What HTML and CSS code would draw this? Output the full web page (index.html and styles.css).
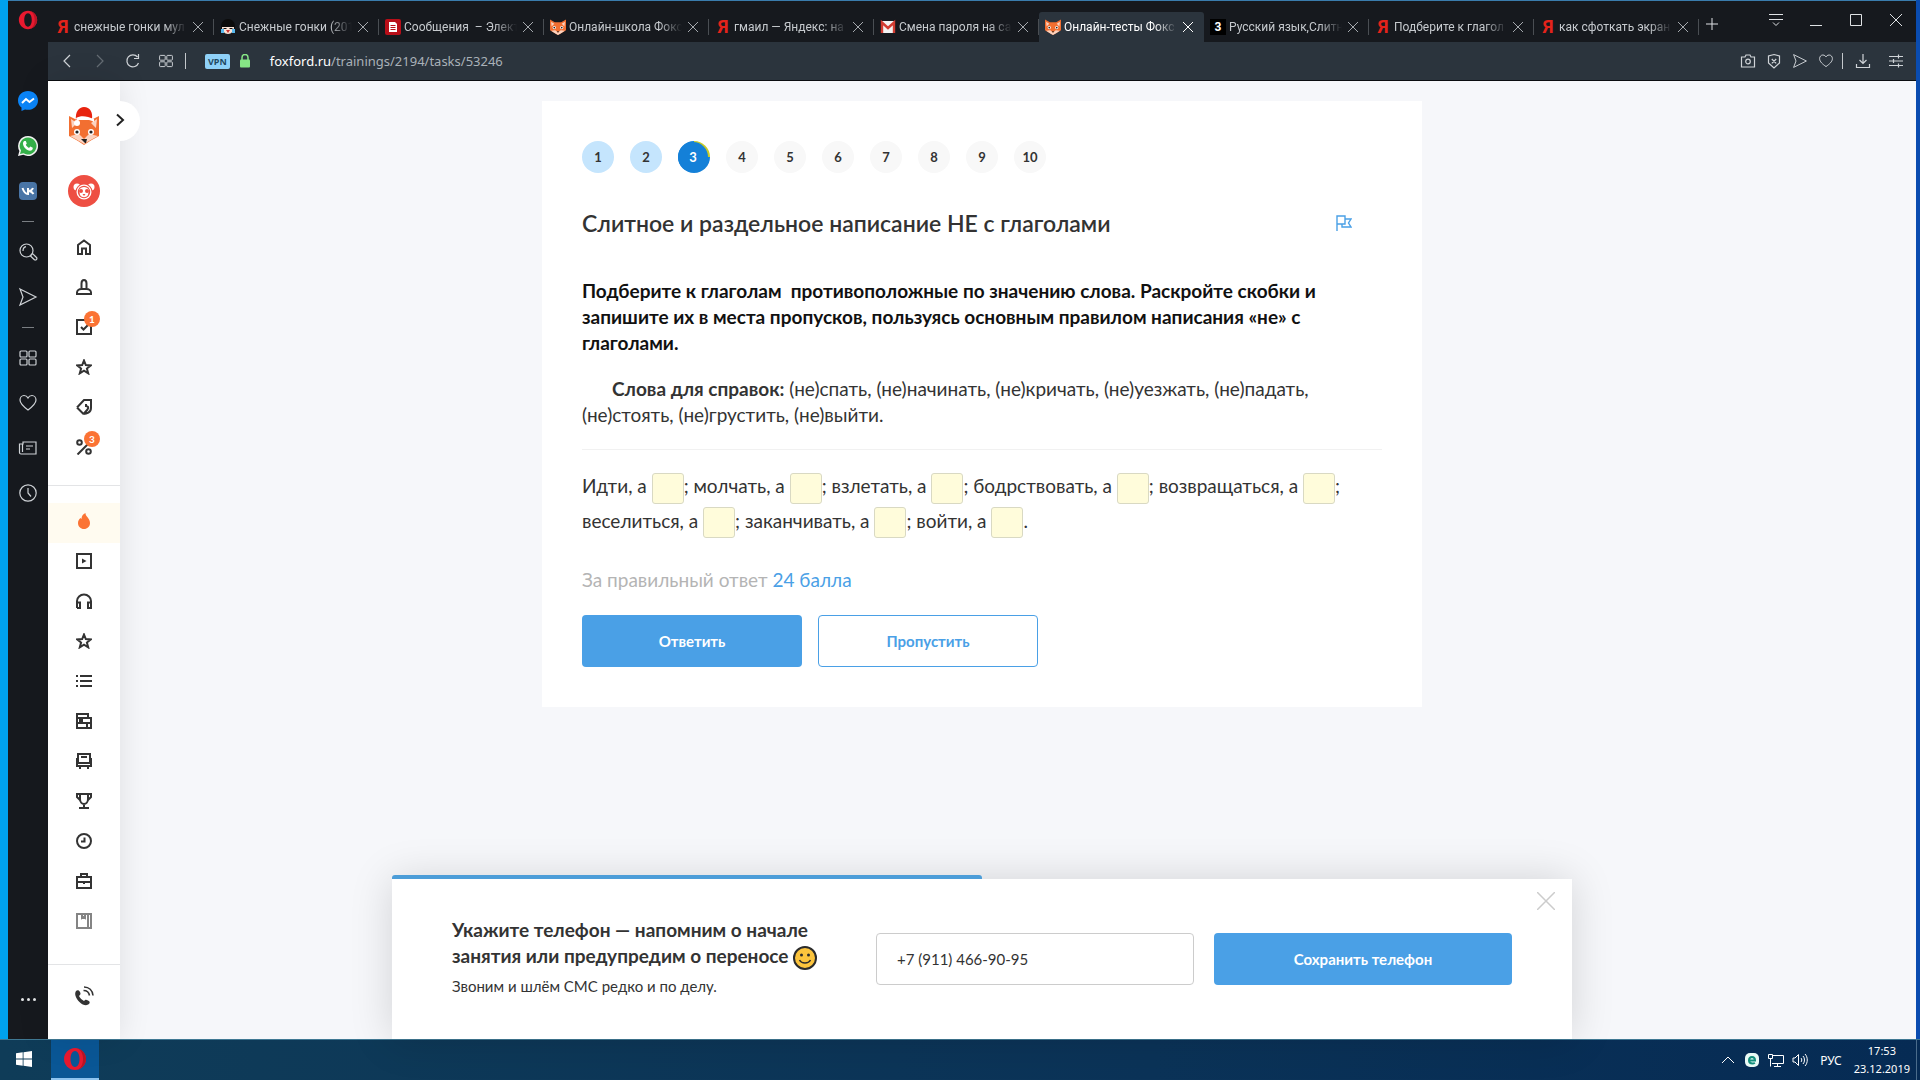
FILE: index.html
```html
<!DOCTYPE html>
<html lang="ru">
<head>
  <meta charset="UTF-8">
  <title>Онлайн-тесты Фоксфорд</title>
  <link rel="stylesheet" href="styles.css">
</head>
<body>
  <!-- shared icons -->
  <svg class="sprite" width="0" height="0">
    <symbol id="i-x" viewBox="0 0 16 16"><path d="M3 3l10 10M13 3L3 13"/></symbol>
    <symbol id="i-heart" viewBox="0 0 20 20"><path d="M10 17C6 14 2 11 2 7c0-2.500 1.800-4.500 4-4.500S9.500 4 10 5c.5-1 1.800-2.500 4-2.500s4 2 4 4.500c0 4-4 7-8 10z"/></symbol>
    <symbol id="i-send" viewBox="0 0 20 20"><path d="M2 2l16 8-16 8 3-8z"/></symbol>
    <symbol id="i-grid" viewBox="0 0 20 20"><rect x="2" y="3" width="7" height="6" rx="1"/><rect x="11" y="3" width="7" height="6" rx="1"/><rect x="2" y="11" width="7" height="6" rx="1"/><rect x="11" y="11" width="7" height="6" rx="1"/></symbol>
    <symbol id="i-star" viewBox="0 0 16 16"><path d="M8 1.500l1.800 4.600 5 .3-3.900 3.100 1.300 4.800L8 11.600l-4.200 2.700 1.300-4.800L1.200 6.400l5-.3z"/></symbol>
    <symbol id="i-fox" viewBox="0 0 30 30">
      <path fill="#f26f31" d="M0 1l9 5h12l9-5v20l-10 6-5 3-5-3-10-6z"/>
      <path fill="#fbd3c0" d="M2 5l6 4-5 5zM28 5l-6 4 5 5z"/>
      <path fill="#fbd3c0" d="M2 22l8-1 5 5 5-5 8 1-8 5-5 3-5-3z"/>
      <circle cx="8" cy="16" r="3" fill="#fff"/><circle cx="22" cy="16" r="3" fill="#fff"/>
      <circle cx="8" cy="16" r="1.600" fill="#222"/><circle cx="22" cy="16" r="1.600" fill="#222"/>
      <path fill="#222" d="M13 23h4l-2 3z"/>
    </symbol>
    <symbol id="i-opera" viewBox="0 0 24 24">
      <path fill="#e8192f" fill-rule="evenodd" d="M12 1c6 0 11 5 11 11s-5 11-11 11S1 18 1 12 6 1 12 1zm0 3C9 4 7.500 8 7.500 12S9 20 12 20s4.500-4 4.500-8S15 4 12 4z"/>
      <path fill="#b81526" d="M14 1.200c5 1 9 5.400 9 10.800s-4 9.800-9 10.800c4-1 6-6 6-10.800S18 2.200 14 1.200z"/>
    </symbol>
  </svg>

  <div class="desktop">
    <div class="window">
      <aside class="opera-bar">
        <button class="opera-logo" aria-label="Opera"><svg class="i20"><use href="#i-opera"/></svg></button>
        <nav class="opera-nav">
          <a href="#" aria-label="Messenger"><svg class="i20" viewBox="0 0 20 20"><path fill="#0a84f7" d="M10 0c5.600 0 10 4 10 9.400s-4.400 9.400-10 9.400c-1 0-2 0-3-.4L3.500 20v-3.500C1.300 14.900 0 12.400 0 9.400 0 4 4.400 0 10 0z"/><path fill="none" stroke="#fff" stroke-width="2" d="M4 12l4-4 3.500 3L16 7.500"/></svg></a>
          <a href="#" aria-label="WhatsApp"><svg class="i20" viewBox="0 0 20 20"><path fill="#f4f4f4" d="M10 0a10 10 0 1 1-4.700 18.800L0 20l1.400-5A10 10 0 0 1 10 0z"/><path fill="#35b14a" d="M10 1.500a8.500 8.500 0 1 1-4.500 15.700L2 18l1-3.400A8.500 8.500 0 0 1 10 1.500z"/><path fill="#fff" d="M6.500 5h1.300l1 2.500-1 1.200c.6 1.400 1.700 2.500 3.200 3.200l1.300-1.300 2.500 1.200c.2 2-1.300 3-2.800 3C8.500 14.500 5 11 5 7.500 5 6.300 5.600 5.300 6.500 5z"/></svg></a>
          <a href="#" aria-label="VK"><svg class="i18" viewBox="0 0 18 18"><rect width="18" height="18" rx="4" fill="#4a76a8"/><path fill="none" stroke="#fff" stroke-width="2" d="M3.500 6c1 3 2.500 6 5.500 6V6M14 6c-.6 1.600-2.500 3-4.500 3 2 0 4 1.500 5 3"/></svg></a>
          <span class="dash"></span>
          <a href="#" aria-label="Поиск"><svg class="i20 line" viewBox="0 0 20 20"><circle cx="8.500" cy="8.500" r="6.500"/><path d="M5 9c0-2.500 1.200-4 3-4.300M13 13l1.500-1.500 4 4c.8.800.3 2.300-1 2.500-.4.100-.8 0-1.100-.3L12.500 14z"/></svg></a>
          <a href="#" aria-label="Моё"><svg class="i20 line"><use href="#i-send"/></svg></a>
          <span class="dash"></span>
          <a href="#" aria-label="Экспресс-панель"><svg class="i20 line"><use href="#i-grid"/></svg></a>
          <a href="#" aria-label="Закладки"><svg class="i20 line"><use href="#i-heart"/></svg></a>
          <a href="#" aria-label="Новости"><svg class="i20 line" viewBox="0 0 20 20"><path d="M5 4h13v12H3c-1 0-1.500-.5-1.500-1.500V6H5zM4.500 6v8M8 8h7M8 11h4"/></svg></a>
          <a href="#" aria-label="История"><svg class="i20 line" viewBox="0 0 20 20"><circle cx="10" cy="10" r="8.200"/><path d="M10 5v5l3 3.500"/></svg></a>
        </nav>
        <button class="dots" aria-label="Ещё"><i></i><i></i><i></i></button>
      </aside>

      <div class="browser">
        <header class="tabs">
          <div class="tab"><b class="ya">Я</b><span>снежные гонки мул</span><button aria-label="Закрыть"><svg><use href="#i-x"/></svg></button></div>
          <div class="tab"><svg class="fav" viewBox="0 0 16 16"><circle cx="8" cy="7" r="7" fill="#0b0b0b"/><path fill="#fbe3d6" d="M2 8h12c0 4-2.500 7-6 7S2 12 2 8z"/><path stroke="#111" d="M3.500 9.500h3M9.500 9.500h3"/><path fill="#58b9ee" d="M1 10h3v4H1zM12 10h3v4h-3z"/><path fill="#c33" d="M6 11h4l-2 3z"/></svg><span>Снежные гонки (201</span><button aria-label="Закрыть"><svg><use href="#i-x"/></svg></button></div>
          <div class="tab"><svg class="fav" viewBox="0 0 16 16"><rect width="16" height="16" rx="2" fill="#b80f19"/><path fill="#fff" d="M4 3h6l2 2v8H4z"/><path stroke="#b80f19" d="M5.500 6.500h5M5.500 8.500h5M5.500 10.500h5"/></svg><span>Сообщения &nbsp;– Элект</span><button aria-label="Закрыть"><svg><use href="#i-x"/></svg></button></div>
          <div class="tab"><svg class="fav"><use href="#i-fox"/></svg><span>Онлайн-школа Фокс</span><button aria-label="Закрыть"><svg><use href="#i-x"/></svg></button></div>
          <div class="tab"><b class="ya">Я</b><span>гмаил — Яндекс: на</span><button aria-label="Закрыть"><svg><use href="#i-x"/></svg></button></div>
          <div class="tab"><svg class="fav" viewBox="0 0 16 16"><path fill="#f3f3f3" d="M1 2h14v12H1z"/><path fill="none" stroke="#d23c32" stroke-width="2.400" d="M2 14V3.500L8 9l6-5.500V14"/></svg><span>Смена пароля на са</span><button aria-label="Закрыть"><svg><use href="#i-x"/></svg></button></div>
          <div class="tab active"><svg class="fav"><use href="#i-fox"/></svg><span>Онлайн-тесты Фокс</span><button aria-label="Закрыть"><svg><use href="#i-x"/></svg></button></div>
          <div class="tab"><b class="fav three">3</b><span>Русский язык,Слитн</span><button aria-label="Закрыть"><svg><use href="#i-x"/></svg></button></div>
          <div class="tab"><b class="ya">Я</b><span>Подберите к глагол</span><button aria-label="Закрыть"><svg><use href="#i-x"/></svg></button></div>
          <div class="tab"><b class="ya">Я</b><span>как сфоткать экран</span><button aria-label="Закрыть"><svg><use href="#i-x"/></svg></button></div>
          <button class="new-tab" aria-label="Новая вкладка"><svg viewBox="0 0 12 12"><path d="M6 0v12M0 6h12"/></svg></button>
          <div class="win-controls">
            <button aria-label="Меню вкладок"><svg viewBox="0 0 16 16"><path d="M1 2.500h14M1 7.500h14M5 10.500l3 3 3-3"/></svg></button>
            <button aria-label="Свернуть"><svg viewBox="0 0 16 16"><path d="M2 13.500h12"/></svg></button>
            <button aria-label="Развернуть"><svg viewBox="0 0 16 16"><path d="M2.500 2.500h11v11h-11z"/></svg></button>
            <button aria-label="Закрыть окно"><svg viewBox="0 0 16 16"><path d="M2 2l12 12M14 2L2 14"/></svg></button>
          </div>
        </header>

        <div class="address">
          <button aria-label="Назад"><svg class="line" viewBox="0 0 16 16"><path d="M11 2L5 8l6 6"/></svg></button>
          <button class="dim" aria-label="Вперёд"><svg class="line" viewBox="0 0 16 16"><path d="M5 2l6 6-6 6"/></svg></button>
          <button aria-label="Обновить"><svg class="line" viewBox="0 0 16 16"><path d="M13.500 10A6 6 0 1 1 12.500 4M13.500 1v4.500H9"/></svg></button>
          <button aria-label="Экспресс-панель"><svg class="line"><use href="#i-grid"/></svg></button>
          <i class="bar"></i>
          <span class="vpn">VPN</span>
          <svg class="lock" viewBox="0 0 10 14"><path fill="none" stroke="#86e686" stroke-width="1.500" d="M2 6V3.500a3 3 0 0 1 6 0V6"/><rect y="5.500" width="10" height="8" rx="1" fill="#86e686"/></svg>
          <span class="url"><b>foxford.ru</b>/trainings/2194/tasks/53246</span>
          <div class="tools">
            <button aria-label="Снимок"><svg class="line" viewBox="0 0 16 16"><path d="M1.500 4H5l1-2h4l1 2h3.500v10h-13z"/><circle cx="8" cy="8.500" r="2.300"/></svg></button>
            <button aria-label="Блокировка"><svg class="line" viewBox="0 0 16 16"><path d="M8 1.500L13.500 3v7L8 15l-5.500-5V3zM5.800 6l4.400 4.400M10.200 6l-4.400 4.400"/></svg></button>
            <button aria-label="Отправить"><svg class="line"><use href="#i-send"/></svg></button>
            <button aria-label="В закладки"><svg class="line"><use href="#i-heart"/></svg></button>
            <i class="bar"></i>
            <button class="wide" aria-label="Загрузки"><svg class="line" viewBox="0 0 16 16"><path d="M8 1v9M4.500 7L8 10.500 11.500 7M1.500 11v3.500h13V11"/></svg></button>
            <button class="wide" aria-label="Настройка"><svg class="line" viewBox="0 0 16 16"><path d="M1 3.500h14M1 8h14M1 12.500h14M10.500 1.500v4M5.500 6v4M10.500 10.500v4"/></svg></button>
          </div>
        </div>

        <div class="page">
          <aside class="fox-bar">
            <a class="logo" href="#" aria-label="Фоксфорд"><svg viewBox="0 0 30 38"><path fill="#f26f31" d="M0 9l8 4h14l8-4v20l-9 5-6 4-6-4-9-5z"/><path fill="#fbd3c0" d="M2 12l6 4-5 5zM28 12l-6 4 5 5z"/><path fill="#fbd3c0" d="M1 29l9-2 5 5 5-5 9 2-9 5-5 3-5-3z"/><path fill="#e8230f" d="M7 13C6 5 10 0 15 0c6 0 9 5 8 12l-8-2z"/><path fill="#fff" d="M7 11c5-3 11-2 18 1v3c-6-3-12-3-17-1z"/><circle cx="8" cy="16" r="3" fill="#fff"/><circle cx="8" cy="25" r="3" fill="#fff"/><circle cx="22" cy="25" r="3" fill="#fff"/><circle cx="8" cy="25" r="1.600" fill="#222"/><circle cx="22" cy="25" r="1.600" fill="#222"/><path fill="#222" d="M12 32h6l-1 4h-1z"/></svg></a>
            <a class="avatar" href="#" aria-label="Профиль"><svg viewBox="0 0 32 32"><circle cx="16" cy="16" r="16" fill="#ee4f43"/><circle cx="9" cy="12" r="3.500" fill="#fff"/><circle cx="23" cy="12" r="3.500" fill="#fff"/><circle cx="16" cy="17" r="8.500" fill="#ee4f43"/><circle cx="16" cy="17" r="7.500" fill="#fff"/><circle cx="16" cy="17" r="6.200" fill="#ee4f43"/><path fill="#fff" d="M11 15c2-4 8-4 10 0l-1 5c-2 3-6 3-8 0z"/><circle cx="13" cy="16" r="2" fill="#ee4f43"/><circle cx="19" cy="16" r="2" fill="#ee4f43"/><path fill="#ee4f43" d="M14.500 19h3L16 21z"/></svg></a>
            <nav class="menu top">
              <a href="#" aria-label="Главная"><svg viewBox="0 0 16 16"><path d="M2 15V6l6-4.500L14 6v9h-4V9.500H6V15z"/></svg></a>
              <a href="#" aria-label="Профиль"><svg viewBox="0 0 16 16"><path d="M5.500 10C3 10 1 11.500 1 13.500V15h14v-1.500C15 11.500 13 10 10.500 10zM5.500 10V4.500C5.500 2.500 6.500 1 8 1s2.500 1.500 2.500 3.500V10"/></svg></a>
              <a href="#" aria-label="Задания"><svg viewBox="0 0 16 16"><path d="M1 1h14v14H1zM5 8l2.500 2.500L12 6"/></svg><b class="badge">1</b></a>
              <a href="#" aria-label="Избранное"><svg><use href="#i-star"/></svg></a>
              <a href="#" aria-label="Цены"><svg viewBox="0 0 16 16"><path d="M1 8.500L8 1h7v8M1 8.500L7.500 15M7.500 15c3 0 7.500-1.500 7.500-6M10 5v2c2 0 3 1.500 1.500 3.500L7.500 15"/></svg></a>
              <a href="#" aria-label="Скидки"><svg viewBox="0 0 16 16"><path d="M1.500 15.500L13 4"/><circle cx="3.500" cy="3.500" r="2.300"/><circle cx="12.500" cy="12.500" r="2.300"/></svg><b class="badge">3</b></a>
            </nav>
            <nav class="menu main">
              <a class="hot" href="#" aria-label="Акции"><svg viewBox="0 0 16 16"><path fill="#fb7334" stroke="none" d="M9.500 0c-.5 3 4.500 5 4.500 10 0 3.500-2.700 6-6 6s-6-2.500-6-6c0-2 1-4 2.500-5l1 1C5.500 3 7 1 9.500 0z"/></svg></a>
              <a href="#" aria-label="Видео"><svg viewBox="0 0 16 16"><path d="M1 1h14v14H1z"/><path fill="#333" stroke="none" d="M6 5.500v5L10.500 8z"/></svg></a>
              <a href="#" aria-label="Аудио"><svg viewBox="0 0 16 16"><path d="M1 15V8a7 6.500 0 0 1 14 0v7h-3V9.500h3M1 9.500h3V15H1"/></svg></a>
              <a href="#" aria-label="Курсы"><svg><use href="#i-star"/></svg></a>
              <a href="#" aria-label="Список"><svg viewBox="0 0 16 16"><path d="M0 3h2M4 3h12M0 8h2M4 8h12M0 13h2M4 13h12"/></svg></a>
              <a href="#" aria-label="Учебники"><svg viewBox="0 0 16 16"><path d="M1 1h11v4H1zM4 5h11v5H4zM1 10h14v5H1zM6 5v5M11 10v5M1 5v5"/></svg></a>
              <a href="#" aria-label="Репетитор"><svg viewBox="0 0 16 16"><path d="M2 1h12v9H2zM5 4h6M1 5v8h14V5M4 13v3M12 13v3"/></svg></a>
              <a href="#" aria-label="Олимпиады"><svg viewBox="0 0 16 16"><path d="M4 1h8v5c0 3-2 5-4 5S4 9 4 6zM4 1H1v3l3 3M12 1h3v3l-3 3M8 11v4M3 15h10"/></svg></a>
              <a href="#" aria-label="Расписание"><svg viewBox="0 0 16 16"><circle cx="8" cy="8" r="7"/><path d="M8.500 4.500v4H5"/></svg></a>
              <a href="#" aria-label="Портфель"><svg viewBox="0 0 16 16"><path d="M1 4h14v11H1zM5 4V1h6v3M1 9h14M8 9v2"/></svg></a>
              <a class="faded" href="#" aria-label="Дневник"><svg viewBox="0 0 16 16"><path d="M1 1h14v14H1zM12 1v14M6 1v4l1.500-1L9 5V1"/></svg></a>
            </nav>
            <a class="phone" href="#" aria-label="Позвонить"><svg viewBox="0 0 20 20"><path fill="#333" d="M2 5c1.500-1.500 3-1 4 1s.5 2.500-1 4c1 2 3 4 5 5 1.500-1.500 2-1.500 4-.5s2.200 2 1 3.500c-2 2-6 1.500-9.500-2S0 8 2 5z"/><path fill="none" stroke="#333" stroke-width="1.600" d="M10 1c5 0 8.500 3.500 9 8.500M9.500 4.500c3 0 5.500 2 6 5"/></svg></a>
            <button class="expand" aria-label="Развернуть меню"><svg viewBox="0 0 16 16"><path d="M5 2.500L11 8l-6 5.500"/></svg></button>
          </aside>

          <main class="card">
            <ol class="steps">
              <li class="done">1</li>
              <li class="done">2</li>
              <li class="current"><span>3</span></li>
              <li>4</li>
              <li>5</li>
              <li>6</li>
              <li>7</li>
              <li>8</li>
              <li>9</li>
              <li>10</li>
            </ol>
            <div class="task-head">
              <h1>Слитное и раздельное написание НЕ с глаголами</h1>
              <a href="#" aria-label="Пожаловаться"><svg viewBox="0 0 16 16"><path d="M1 16V1h8v8H1M9 4h6l-2.500 4L15 12H6V9"/></svg></a>
            </div>
            <p class="question">Подберите к глаголам &nbsp;противоположные по значению слова. Раскройте скобки и запишите их в места пропусков, пользуясь основным правилом написания «не» с глаголами.</p>
            <p class="words"><b>Слова для справок:</b> (не)спать, (не)начинать, (не)кричать, (не)уезжать, (не)падать, (не)стоять, (не)грустить, (не)выйти.</p>
            <hr>
            <form>
              <p class="gaps">
                Идти, а <input type="text" aria-label="Идти">; молчать, а <input type="text" aria-label="Молчать">; взлетать, а <input type="text" aria-label="Взлетать">; бодрствовать, а <input type="text" aria-label="Бодрствовать">; возвращаться, а <input type="text" aria-label="Возвращаться">; веселиться, а <input type="text" aria-label="Веселиться">; заканчивать, а <input type="text" aria-label="Заканчивать">; войти, а <input type="text" aria-label="Войти">.
              </p>
              <p class="score">За правильный ответ <span>24 балла</span></p>
              <div class="actions">
                <button class="btn" type="button">Ответить</button>
                <button class="btn ghost" type="button">Пропустить</button>
              </div>
            </form>
          </main>

          <form class="popup">
            <div class="progress"></div>
            <button class="close" type="button" aria-label="Закрыть"><svg viewBox="0 0 18 18"><path d="M0 0l18 18M18 0L0 18"/></svg></button>
            <div class="popup-text">
              <label for="phone">Укажите телефон — напомним о начале занятия или предупредим о переносе <svg viewBox="0 0 24 24"><circle cx="12" cy="12" r="11" fill="#fcc43d" stroke="#2b2b2b" stroke-width="2"/><circle cx="8.500" cy="9" r="1.500" fill="#2b2b2b"/><circle cx="15.500" cy="9" r="1.500" fill="#2b2b2b"/><path fill="none" stroke="#2b2b2b" stroke-width="1.500" d="M6.500 14c2 4 9 4 11 0"/></svg></label>
              <p>Звоним и шлём СМС редко и по делу.</p>
            </div>
            <input id="phone" type="tel" value="+7 (911) 466-90-95">
            <button class="btn" type="button">Сохранить телефон</button>
          </form>
        </div>
      </div>
    </div>

    <footer class="taskbar">
      <button class="start" aria-label="Пуск"><svg viewBox="0 0 16 16"><path fill="#fff" d="M0 2.300L6.700 1.300V7.600H0zM7.500 1.200L16 0v7.600H7.500zM0 8.400h6.700v6.300L0 13.700zM7.500 8.400H16V16l-8.500-1.200z"/></svg></button>
      <button class="task" aria-label="Opera"><svg><use href="#i-opera"/></svg></button>
      <div class="tray">
        <svg viewBox="0 0 16 16"><path d="M2 11l6-6 6 6"/></svg>
        <svg viewBox="0 0 16 16"><rect x="1" y="1" width="14" height="14" rx="5" fill="#eafaf6" stroke="none"/><path stroke="#138f7c" stroke-width="2" d="M5 8.500h6C11 6 10 5 8 5S5 6.500 5 8.500s1.500 3 3.500 3c1 0 1.700-.3 2.300-.8"/></svg>
        <svg viewBox="0 0 16 16"><path d="M4 3.500h11.500v8H4M.5 2.500h4v4h-4zM2.500 6.500v8M9.500 11.500v3M6 14.500h7"/></svg>
        <svg viewBox="0 0 16 16"><path d="M1 6h2l3.500-3.500v11L3 10H1zM9 6c1 1 1 3 0 4M11 4c2 2 2 6 0 8M13 2c3 3 3 9 0 12"/></svg>
        <span>РУС</span>
        <time>17:53<br>23.12.2019</time>
      </div>
    </footer>
  </div>
</body>
</html>
```
FILE: styles.css
```css
* {
  box-sizing: border-box;
}
body {
  margin: 0;
  font-family: Lato, "Noto Sans", sans-serif;
  color: #333;
}
button {
  margin: 0;
  padding: 0;
  border: 0;
  background: none;
  font-family: inherit;
  color: inherit;
  cursor: pointer;
}
p, h1, ol {
  margin: 0;
  padding: 0;
}
.sprite {
  position: absolute;
}

/* Desktop and browser window */
.desktop {
  display: flex;
  flex-direction: column;
  height: 100vh;
  overflow: hidden;
  background: linear-gradient(90deg, #00a2ee 50%, #0a4cb0 50%);
}
.window {
  flex: 1;
  display: flex;
  min-height: 0;
  margin: 0 4px 0 8px;
  border-top: 1px solid #3a7cad;
  background: #16191e;
  font-family: "Noto Sans", "Open Sans", sans-serif;
}
.browser {
  flex: 1;
  display: flex;
  flex-direction: column;
  min-width: 0;
}
.line {
  fill: none;
  stroke: #d0d4d8;
  stroke-width: 1.2;
}
.i20 {
  width: 20px;
  height: 20px;
}
.i18 {
  width: 18px;
  height: 18px;
}

/* Opera sidebar */
.opera-bar {
  width: 40px;
  display: flex;
  flex-direction: column;
  align-items: center;
}
.opera-logo {
  height: 42px;
  margin-bottom: 35px;
}
.opera-nav {
  display: flex;
  flex-direction: column;
  align-items: center;
}
.opera-nav a {
  display: grid;
  place-items: center;
  width: 40px;
  height: 45px;
}
.dash {
  width: 12px;
  height: 1px;
  margin: 8px 0 7px;
  background: #7b7f84;
}
.dots {
  display: flex;
  gap: 3px;
  margin-top: auto;
  padding: 38px 0;
}
.dots i {
  width: 3px;
  height: 3px;
  border-radius: 50%;
  background: #e4e6e8;
}

/* Tabs */
.tabs {
  display: flex;
  align-items: flex-end;
  height: 41px;
  padding-left: 1px;
  font-family: Roboto, "Noto Sans", sans-serif;
  font-size: 12px;
  color: #c6cace;
}
.tab {
  display: flex;
  align-items: center;
  gap: 3px;
  flex: 0 1 165px;
  min-width: 0;
  height: 30px;
  padding: 0 8px 0 6px;
  background: linear-gradient(#4a4e53, #4a4e53) 100% 50% / 1px 16px no-repeat;
}
.tab span {
  flex: 1;
  overflow: hidden;
  white-space: nowrap;
  -webkit-mask-image: linear-gradient(90deg, #000 80%, transparent);
  mask-image: linear-gradient(90deg, #000 80%, transparent);
}
.tab button {
  display: flex;
}
.tab button svg {
  width: 16px;
  height: 16px;
  stroke: #a4a8ad;
}
.tab.active {
  background: #2b343d;
  border-radius: 3px 3px 0 0;
  color: #fff;
}
.tab.active button svg {
  stroke: #fff;
}
.fav {
  flex: none;
  width: 16px;
  height: 16px;
}
.ya {
  flex: none;
  width: 16px;
  font-family: "Liberation Sans Narrow", Roboto, sans-serif;
  font-size: 18px;
  line-height: 20px;
  text-align: center;
  color: #e5231b;
}
.three {
  background: #000;
  color: #fff;
  line-height: 16px;
  text-align: center;
}
.new-tab {
  width: 26px;
  height: 34px;
}
.new-tab svg {
  width: 12px;
  height: 12px;
  stroke: #dfe2e5;
}
.win-controls {
  display: flex;
  align-self: flex-start;
  margin-left: auto;
}
.win-controls button {
  width: 40px;
  height: 40px;
}
.win-controls svg {
  width: 16px;
  height: 16px;
  fill: none;
  stroke: #dfe2e5;
}

/* Address bar */
.address {
  display: flex;
  align-items: center;
  height: 39px;
  padding: 0 4px 0 2px;
  border-bottom: 1px solid #0b0d10;
  background: #2b343d;
}
.address button {
  display: grid;
  place-items: center;
  width: 33px;
  height: 32px;
}
.address button svg {
  width: 16px;
  height: 16px;
}
.address .dim {
  opacity: .35;
}
.bar {
  width: 1px;
  height: 16px;
  margin: 0 3px;
  background: #c3c7cb;
}
.vpn {
  margin: 0 10px 0 16px;
  padding: 0 3px;
  border-radius: 2px;
  background: #8fd1f8;
  color: #1f4962;
  font-size: 9px;
  line-height: 15px;
  font-weight: 700;
}
.lock {
  width: 10px;
  height: 14px;
  margin-right: 20px;
}
.url {
  color: #a9b1b8;
  font-size: 13px;
}
.url b {
  color: #fff;
  font-weight: 400;
}
.tools {
  display: flex;
  align-items: center;
  margin-left: auto;
}
.address .tools button {
  width: 26px;
}
.address .tools .wide {
  width: 33px;
}

/* Page */
.page {
  position: relative;
  flex: 1;
  min-height: 0;
  padding-top: 20px;
  background: #f6f7fa;
  font-family: Lato, "Noto Sans", sans-serif;
}
.fox-bar {
  position: absolute;
  top: 0;
  bottom: 0;
  left: 0;
  width: 72px;
  display: flex;
  flex-direction: column;
  align-items: center;
  background: #fff;
  box-shadow: 0 0 32px rgba(0, 0, 0, .1);
}
.logo, .avatar, .phone {
  display: flex;
}
.logo {
  margin: 26px 0 30px;
}
.logo svg {
  width: 30px;
  height: 38px;
}
.avatar svg {
  width: 32px;
  height: 32px;
}
.menu {
  width: 100%;
}
.menu a {
  position: relative;
  display: grid;
  place-items: center;
  height: 40px;
}
.menu svg {
  width: 16px;
  height: 16px;
  fill: none;
  stroke: #333;
  stroke-width: 2;
}
.menu.top {
  padding: 20px 0 18px;
  border-bottom: 1px solid #e3e4e6;
}
.menu.main {
  flex: 1;
  padding-top: 17px;
}
.menu.main a {
  padding-bottom: 4px;
}
.hot {
  background: #fffbf0;
}
.faded {
  opacity: .6;
}
.badge {
  position: absolute;
  top: 4px;
  left: 36px;
  width: 16px;
  height: 16px;
  border-radius: 50%;
  background: #fb7334;
  color: #fff;
  font-size: 10px;
  line-height: 16px;
  text-align: center;
}
.phone {
  width: 100%;
  height: 75px;
  justify-content: center;
  padding-top: 21px;
  border-top: 1px solid #e3e4e6;
}
.phone svg {
  width: 20px;
  height: 20px;
}
.expand {
  position: absolute;
  top: 20px;
  right: -20px;
  width: 40px;
  height: 40px;
  border-radius: 0 20px 20px 0;
  background: #fff;
}
.expand svg {
  width: 16px;
  height: 16px;
  fill: none;
  stroke: #222;
  stroke-width: 2;
}

/* Task card */
.card {
  width: 880px;
  max-width: 100%;
  margin: 0 auto;
  padding: 40px;
  background: #fff;
  font-size: 19px;
  line-height: 26px;
}
.steps {
  display: flex;
  gap: 16px;
  list-style: none;
}
.steps li {
  display: grid;
  place-items: center;
  width: 32px;
  height: 32px;
  border-radius: 50%;
  background: #f8f8f8;
  font-size: 13px;
  font-weight: 700;
}
.steps .done {
  background: #c5e5fd;
}
.steps .current {
  padding-right: 2px;
  background: conic-gradient(#c6cb28 25%, #1480d8 0);
}
.steps .current span {
  width: 30px;
  height: 30px;
  border-radius: 50%;
  background: #1480d8;
  color: #fff;
  line-height: 30px;
  text-align: center;
}
.task-head {
  display: flex;
  align-items: center;
  justify-content: space-between;
  margin: 34px 30px 39px 0;
}
.task-head h1 {
  font-size: 23px;
  line-height: 32px;
  font-weight: 600;
}
.task-head a {
  display: flex;
}
.task-head svg {
  width: 16px;
  height: 16px;
  fill: none;
  stroke: #4aa0e6;
  stroke-width: 1.4;
}
.question {
  color: #111;
  font-weight: 700;
}
.words {
  margin-top: 20px;
  text-indent: 30px;
}
hr {
  height: 1px;
  margin: 21px 0 19px;
  border: 0;
  background: #f1f1f1;
}
.gaps {
  line-height: 34px;
}
.gaps input {
  width: 32px;
  height: 31px;
  padding: 0;
  border: 1px solid #d9d9c3;
  border-radius: 3px;
  background: #fffcdb;
  font: inherit;
  vertical-align: middle;
}
.score {
  margin: 29px 0 22px;
  color: #b4b4b4;
}
.score span {
  color: #4aa0e6;
}
.actions {
  display: flex;
  gap: 16px;
}
.btn {
  height: 52px;
  border-radius: 4px;
  background: #4aa0e6;
  color: #fff;
  font-size: 15px;
  font-weight: 700;
}
.actions .btn {
  width: 220px;
}
.ghost {
  border: 1px solid #4aa0e6;
  background: #fff;
  color: #4aa0e6;
}

/* Phone popup */
.popup {
  position: absolute;
  bottom: 0;
  left: 50%;
  display: flex;
  align-items: flex-start;
  width: 1180px;
  height: 160px;
  margin-left: -590px;
  padding: 38px 60px 0;
  background: #fff;
  box-shadow: 0 0 40px rgba(0, 0, 0, .15);
}
.progress {
  position: absolute;
  top: -4px;
  left: 0;
  width: 50%;
  height: 4px;
  border-radius: 3px 3px 0 0;
  background: #4c9dd8;
}
.close {
  position: absolute;
  top: 13px;
  right: 17px;
  display: flex;
}
.close svg {
  width: 18px;
  height: 18px;
  stroke: #ccc;
  stroke-width: 1.5;
}
.popup-text {
  flex: 1;
}
.popup label {
  display: block;
  width: 390px;
  font-size: 19px;
  line-height: 26px;
  font-weight: 700;
}
.popup label svg {
  width: 24px;
  height: 24px;
  vertical-align: middle;
}
.popup p {
  margin-top: 6px;
  font-size: 15px;
  line-height: 20px;
}
.popup input {
  width: 318px;
  height: 52px;
  margin: 16px 20px 0 0;
  padding: 0 20px;
  border: 1px solid #ccc;
  border-radius: 4px;
  color: #333;
  font-family: inherit;
  font-size: 15px;
}
.popup .btn {
  width: 298px;
  margin-top: 16px;
}

/* Taskbar */
.taskbar {
  display: flex;
  height: 41px;
  padding-right: 3px;
  border-top: 1px solid #3f7893;
  background: linear-gradient(90deg, #0f3c58, #0b3358 60%, #062b54);
  color: #fff;
  font-family: "Noto Sans", "Open Sans", sans-serif;
  font-size: 12px;
}
.start {
  width: 51px;
  padding: 2px 3px 0 0;
}
.start svg {
  width: 16px;
  height: 16px;
}
.task {
  width: 48px;
  padding-top: 4px;
  border-bottom: 2px solid #8ec4f0;
  background: #0a5796;
}
.task svg {
  width: 24px;
  height: 24px;
}
.tray {
  display: flex;
  align-items: center;
  gap: 8px;
  margin-left: auto;
  padding-right: 6px;
  border-right: 1px solid #4a6c8b;
}
.tray svg {
  width: 16px;
  height: 16px;
  fill: none;
  stroke: #fff;
}
.tray span {
  margin: 0 4px;
}
.tray time {
  font-size: 11px;
  line-height: 18px;
  text-align: center;
}
```
